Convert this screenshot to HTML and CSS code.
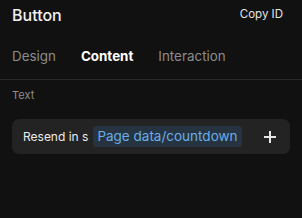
FILE: index.html
```html
<!DOCTYPE html>
<html>
<head>
<meta charset="utf-8">
<link rel="stylesheet" href="styles.css">
</head>
<body>
<div class="panel">
  <div class="header">
    <div class="title">Button</div>
    <div class="copy">Copy ID</div>
  </div>
  <div class="tabs">
    <div class="tab">Design</div>
    <div class="tab active">Content</div>
    <div class="tab">Interaction</div>
  </div>
  <div class="section">
    <div class="label">Text</div>
    <div class="field">
      <span class="plain">Resend in s</span>
      <span class="chip">Page data/countdown</span>
      <span class="plus">
        <svg width="12" height="12" viewBox="0 0 12 12"><path d="M6 0V12M0 6H12" stroke="#e6e6e6" stroke-width="2"/></svg>
      </span>
    </div>
  </div>
</div>
</body>
</html>
```
FILE: styles.css
```css
html, body {
  margin: 0;
  padding: 0;
  background: #111111;
  width: 302px;
  height: 218px;
  overflow: hidden;
  font-family: Inter, "Noto Sans", sans-serif;
}
.panel {
  display: flex;
  flex-direction: column;
}
.header {
  display: flex;
  justify-content: space-between;
  align-items: center;
  padding: 3px 19px 0 12px;
  height: 24px;
}
.title {
  color: #f0f0f0;
  font-size: 16px;
  font-weight: 500;
}
.copy {
  color: #e6e6e6;
  font-size: 11.5px;
  margin-top: -2px;
}
.tabs {
  display: flex;
  gap: 25px;
  padding: 21px 12px 0 12px;
  height: 31px;
  border-bottom: 1px solid #2a2a2a;
}
.tab {
  color: #8c8c8c;
  font-size: 13.4px;
  line-height: 17px;
}
.tab.active {
  color: #ffffff;
  font-weight: 700;
}
.section {
  padding: 8px 12px 0 12px;
}
.label {
  color: #8e8e8e;
  font-size: 11px;
  line-height: 14px;
}
.field {
  margin-top: 17px;
  height: 35px;
  background: #232323;
  border-radius: 7px;
  display: flex;
  align-items: center;
  padding: 0 14px 0 11px;
}
.plain {
  color: #ececec;
  font-size: 12px;
  margin-right: 5px;
}
.chip {
  background: #263441;
  color: #6aaee6;
  font-size: 13.5px;
  height: 21px;
  line-height: 21px;
  padding: 0 4px;
  border-radius: 4px;
}
.plus {
  margin-left: auto;
  display: flex;
}
```
